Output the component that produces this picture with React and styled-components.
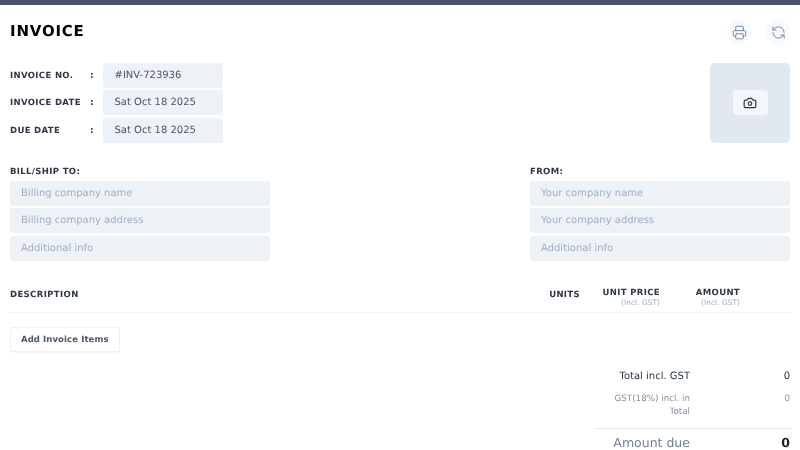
import React from "react";
import styled, { createGlobalStyle } from "styled-components";
import { Printer, RefreshCcw, Camera } from "lucide-react";

const Global = createGlobalStyle`
  html, body { margin: 0; padding: 0; background: #fff; overflow: hidden; }
  body { font-family: "DejaVu Sans", sans-serif; width: 800px; height: 450px; text-rendering: geometricPrecision; -webkit-font-smoothing: antialiased; }
  * { box-sizing: border-box; }
`;
const Page = styled.div`
  width: 800px; height: 450px; overflow: hidden;
  border-top: 5px solid #4a5568;
  padding: 0 10px;
  will-change: transform;
`;
const Head = styled.header`
  display: flex; justify-content: space-between; align-items: center;
  height: 57.5px; padding-bottom: 5.5px;
`;
const Title = styled.h1`
  margin: 0; font-size: 15px; line-height: 20px; font-weight: 700; letter-spacing: 0.8px; color: #000;
`;
const Tools = styled.div`display: flex; gap: 15px; margin-top: 2px;`;
const Round = styled.button`
  width: 24px; height: 24px; border: 0; padding: 0; border-radius: 50%;
  background: #f7fafc; color: #718096; display: flex; align-items: center; justify-content: center;
`;
const Meta = styled.section`
  display: flex; justify-content: space-between; align-items: flex-start;
`;
const MetaRows = styled.div`display: flex; flex-direction: column; gap: 2.5px;`;
const MetaRow = styled.div`display: flex; align-items: center;`;
const MetaLabel = styled.span`
  width: 80px; padding-top: 1px; font-size: 8.5px; font-weight: 700; letter-spacing: 0.35px; color: #2d3748;
`;
const Colon = styled.span`width: 13px; padding-top: 1px; font-size: 9px; font-weight: 700; color: #2d3748;`;
const Field = styled.div`
  height: 25px; width: ${p => p.$w}px; background: #edf2f7; border-radius: 2px;
  padding: 0 ${p => p.$pad || 11}px; font-size: 10px; line-height: ${p => p.$lh || 25}px;
  color: ${p => (p.$ph ? "#a0aec0" : "#4a5568")};
`;
const Logo = styled.div`
  width: 80px; height: 80px; border-radius: 5px; background: #e2e8f0;
  display: flex; align-items: center; justify-content: center;
`;
const LogoButton = styled.button`
  width: 35px; height: 25px; border: 0; padding: 0; border-radius: 4px; background: #f4f6f9; color: #2d3748;
  display: flex; align-items: center; justify-content: center;
`;
const Parties = styled.section`
  display: flex; justify-content: space-between; margin-top: 20px;
`;
const Party = styled.div`display: flex; flex-direction: column; gap: 2.5px;`;
const PartyLabel = styled.div`
  font-size: 8.5px; line-height: 18px; font-weight: 700; letter-spacing: 0.35px; color: #2d3748; margin-bottom: -2.5px;
`;
const TableHead = styled.div`
  display: flex; align-items: flex-start; height: 32px; margin: 20px -2px 0 -2px; padding: 7.5px 0 0 2px;
  border-bottom: 1px solid #edf2f7;
`;
const Desc = styled.div`
  flex: 1; font-size: 8.5px; line-height: 14px; font-weight: 700; letter-spacing: 0.38px; color: #2d3748;
`;
const Col = styled.div`
  width: ${p => p.$w}px; text-align: right; font-size: 8.5px; font-weight: 700; letter-spacing: 0.35px; color: #2d3748;
  line-height: ${p => p.$lh}px;
`;
const Sub = styled.div`font-size: 7.5px; font-weight: 400; letter-spacing: 0; color: #a0aec0; line-height: 8px;`;
const Add = styled.button`
  display: block; margin-top: 14.5px; width: 109.5px; height: 25px; background: #fff; border: 1px solid #edf2f7;
  border-radius: 2px; font-family: inherit; font-size: 8.5px; font-weight: 700; letter-spacing: 0.1px; color: #4a5568; padding: 0;
  box-shadow: 0 1px 1px rgba(0,0,0,0.03);
  text-rendering: geometricPrecision;
`;
const Totals = styled.div`
  margin: 17px 0 0 auto; width: 195px;
`;
const TotalRow = styled.div`
  display: flex; justify-content: space-between; align-items: flex-start;
  color: ${p => p.$c}; font-size: ${p => p.$fs}px; line-height: ${p => p.$lh}px;
  margin-bottom: ${p => p.$mb || 0}px;
`;
const TotalLabel = styled.span`
  width: 95px; text-align: right; flex: none;
`;
const TotalValue = styled.span`font-weight: ${p => (p.$b ? 700 : 400)}; color: ${p => p.$c || "inherit"};`;
const Rule = styled.div`height: 1px; background: #e2e8f0; margin: 0 -2px 6px 1px;`;

const metas = [["INVOICE NO.", "#INV-723936"], ["INVOICE DATE", "Sat Oct 18 2025"], ["DUE DATE", "Sat Oct 18 2025"]];
const parties = [
  ["BILL/SHIP TO:", ["Billing company name", "Billing company address", "Additional info"]],
  ["FROM:", ["Your company name", "Your company address", "Additional info"]],
];

export default function App() {
  return (
    <Page>
      <Global />
      <Head>
        <Title>INVOICE</Title>
        <Tools>
          <Round aria-label="Print"><Printer size={15} strokeWidth={1.5} /></Round>
          <Round aria-label="Reset"><RefreshCcw size={15} strokeWidth={1.5} /></Round>
        </Tools>
      </Head>
      <Meta>
        <MetaRows>
          {metas.map(([l, v]) => (
            <MetaRow key={l}>
              <MetaLabel>{l}</MetaLabel>
              <Colon>:</Colon>
              <Field $w={120} $lh={26} $pad={11.5}>{v}</Field>
            </MetaRow>
          ))}
        </MetaRows>
        <Logo><LogoButton aria-label="Upload logo"><Camera size={14} strokeWidth={2} /></LogoButton></Logo>
      </Meta>
      <Parties>
        {parties.map(([l, fields]) => (
          <Party key={l}>
            <PartyLabel>{l}</PartyLabel>
            {fields.map(f => <Field key={f} $w={260} $ph>{f}</Field>)}
          </Party>
        ))}
      </Parties>
      <TableHead>
        <Desc>DESCRIPTION</Desc>
        <Col $w={60} $lh={14}>UNITS</Col>
        <Col $w={80} $lh={11}>UNIT PRICE<Sub>(Incl. GST)</Sub></Col>
        <Col $w={80} $lh={11}>AMOUNT<Sub>(Incl. GST)</Sub></Col>
        <Col $w={52} $lh={11} />
      </TableHead>
      <Add>Add Invoice Items</Add>
      <Totals>
        <TotalRow $c="#2d3748" $fs={10} $lh={16} $mb={8}>
          <TotalLabel>Total incl. GST</TotalLabel><TotalValue>0</TotalValue>
        </TotalRow>
        <TotalRow $c="#858f9e" $fs={8.75} $lh={13} $mb={9}>
          <TotalLabel>GST(18%) incl. in Total</TotalLabel><TotalValue>0</TotalValue>
        </TotalRow>
        <Rule />
        <TotalRow $c="#718096" $fs={12.5} $lh={16}>
          <TotalLabel>Amount due</TotalLabel><TotalValue $b $c="#1a202c">0</TotalValue>
        </TotalRow>
      </Totals>
    </Page>
  );
}
